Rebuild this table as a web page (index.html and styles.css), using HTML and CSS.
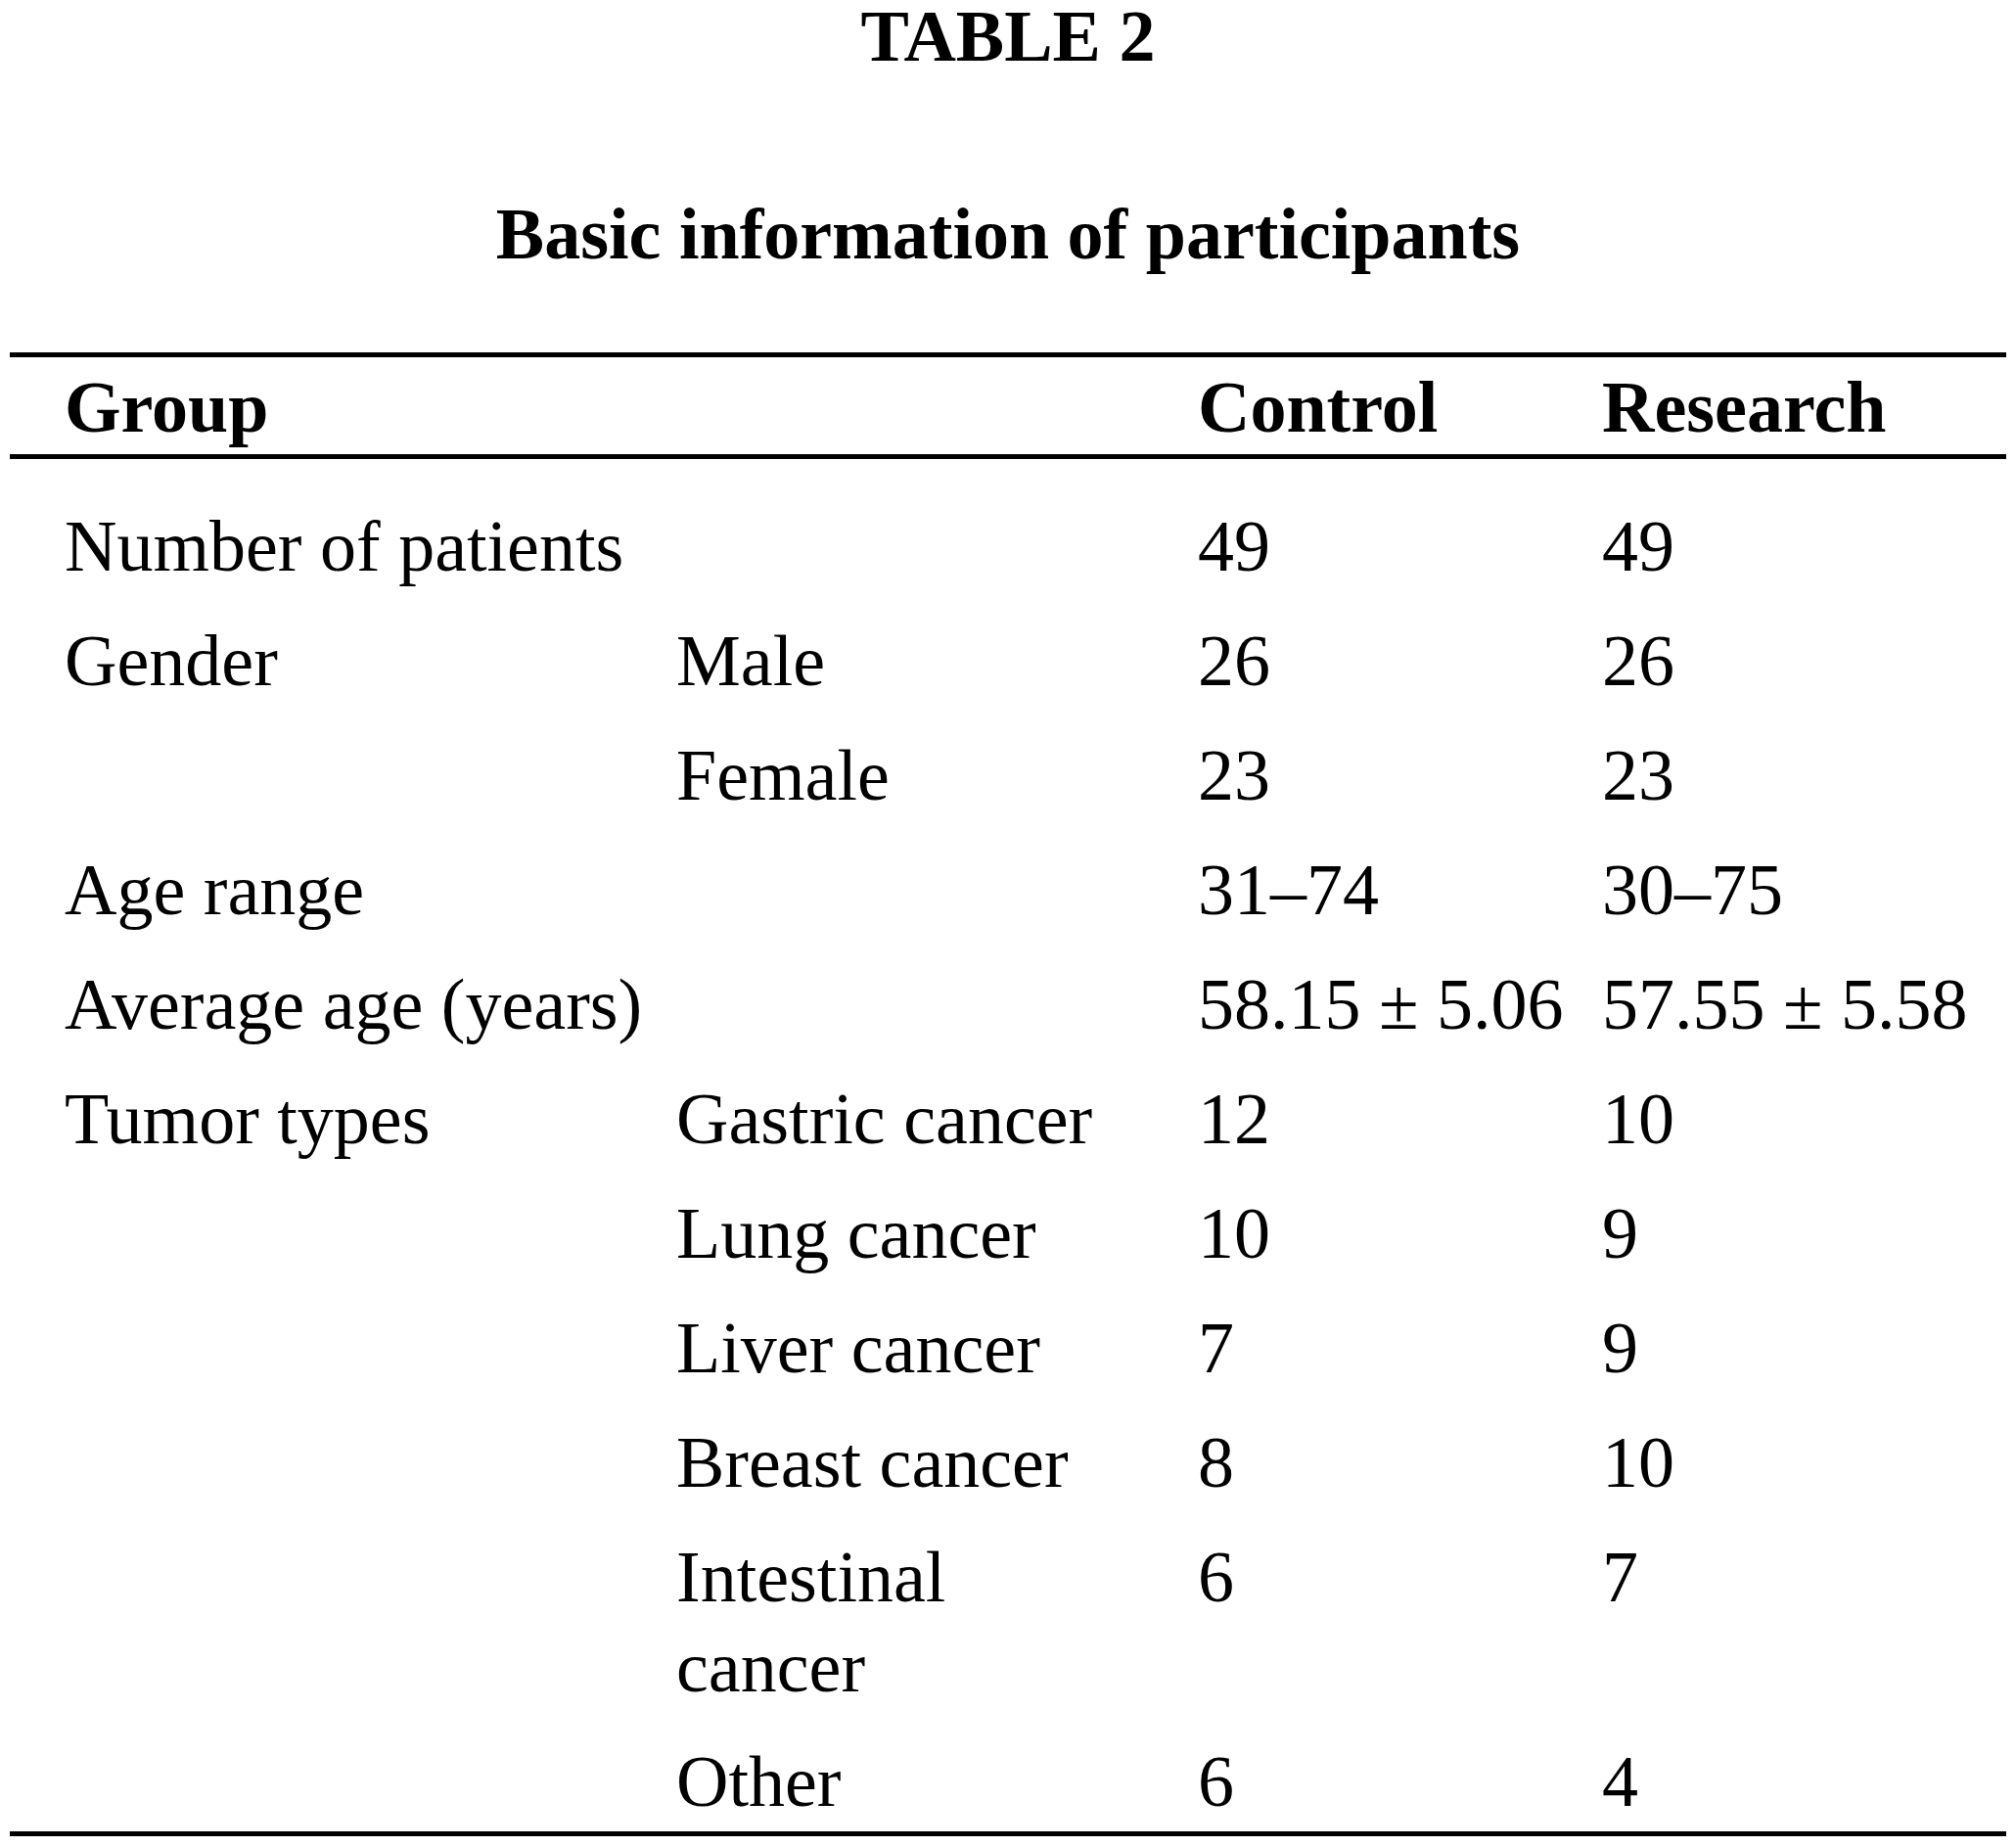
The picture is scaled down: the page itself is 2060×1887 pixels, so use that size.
FILE: index.html
```html
<!DOCTYPE html>
<html lang="en">
<head>
<meta charset="utf-8">
<title>TABLE 2 – Basic information of participants</title>
<link rel="stylesheet" href="styles.css">
</head>
<body>
<div class="page">
  <h1 class="label">TABLE 2</h1>
  <h2 class="caption">Basic information of participants</h2>
  <table class="data">
    <colgroup>
      <col class="c-group">
      <col class="c-sub">
      <col class="c-control">
      <col class="c-research">
    </colgroup>
    <thead>
      <tr>
        <th>Group</th>
        <th></th>
        <th>Control</th>
        <th>Research</th>
      </tr>
    </thead>
    <tbody>
      <tr class="first">
        <td>Number of patients</td><td class="sub"></td><td>49</td><td>49</td>
      </tr>
      <tr>
        <td>Gender</td><td class="sub">Male</td><td>26</td><td>26</td>
      </tr>
      <tr>
        <td></td><td class="sub">Female</td><td>23</td><td>23</td>
      </tr>
      <tr>
        <td>Age range</td><td class="sub"></td><td>31–74</td><td>30–75</td>
      </tr>
      <tr>
        <td>Average age (years)</td><td class="sub"></td><td>58.15 ± 5.06</td><td>57.55 ± 5.58</td>
      </tr>
      <tr>
        <td>Tumor types</td><td class="sub">Gastric cancer</td><td>12</td><td>10</td>
      </tr>
      <tr>
        <td></td><td class="sub">Lung cancer</td><td>10</td><td>9</td>
      </tr>
      <tr>
        <td></td><td class="sub">Liver cancer</td><td>7</td><td>9</td>
      </tr>
      <tr>
        <td></td><td class="sub">Breast cancer</td><td>8</td><td>10</td>
      </tr>
      <tr>
        <td></td><td class="sub">Intestinal cancer</td><td>6</td><td>7</td>
      </tr>
      <tr class="last">
        <td></td><td class="sub">Other</td><td>6</td><td>4</td>
      </tr>
    </tbody>
  </table>
</div>
</body>
</html>
```

FILE: styles.css
```css
html, body {
  margin: 0;
  padding: 0;
  background: #ffffff;
}

body {
  font-family: "Liberation Serif", "Times New Roman", serif;
  color: #000000;
  font-size: 74px;
}

.page {
  width: 2040px;
  margin: 0 10px;
  display: flex;
  flex-direction: column;
  align-items: center;
}

.label,
.caption {
  margin: 0;
  font-size: 74px;
  font-weight: bold;
  line-height: 74px;
  text-align: center;
  width: 100%;
}

.caption {
  margin-top: 128px;
}

.data {
  margin-top: 84px;
  width: 2040px;
  table-layout: fixed;
  border-collapse: collapse;
  border-spacing: 0;
}

.c-group { width: 625px; }
.c-sub { width: 533px; }
.c-control { width: 413px; }
.c-research { width: 469px; }

.data th,
.data td {
  font-size: 74px;
  line-height: 92px;
  text-align: left;
  vertical-align: top;
  white-space: nowrap;
  padding: 12.5px 0 12.5px 56px;
}

.data td.sub {
  white-space: normal;
}

.data th {
  font-weight: bold;
  padding-top: 5px;
  padding-bottom: 2px;
}

.data thead tr {
  border-top: 5px solid #000;
  border-bottom: 5px solid #000;
}

.data tr.first td {
  padding-top: 43px;
}

.data tr.last td {
  padding-bottom: 5px;
}

.data tbody tr.last {
  border-bottom: 5px solid #000;
}
```
